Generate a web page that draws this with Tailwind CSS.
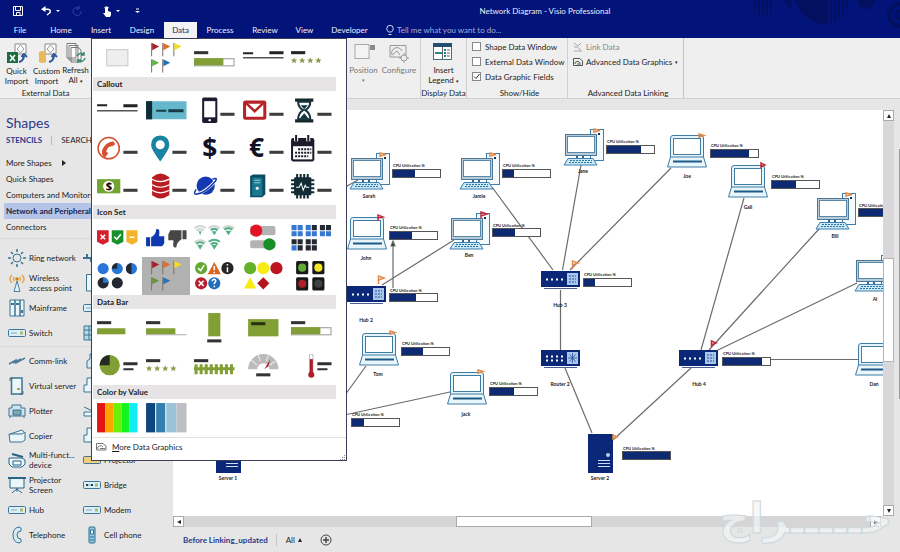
<!DOCTYPE html>
<html lang="en">
<head>
<meta charset="utf-8">
<meta name="viewport" content="width=device-width, initial-scale=1">
<title>Network Diagram - Visio Professional</title>
<script src="https://cdn.jsdelivr.net/npm/@tailwindcss/browser@4"></script>
</head>
<body class="relative flex h-screen flex-col overflow-hidden bg-[#e6e6e6] font-['Lato','Open_Sans',sans-serif] text-[8px] leading-[10px] text-[#1c1c1c]">

<svg class="hidden" aria-hidden="true">
  <defs>
    <g id="flag"><path d="M.5 0V13" stroke="#7d6f68"/><path d="M1 0L8 3.500L1 7Z" fill="currentColor"/></g>
    <path id="star" d="M3 0L3.900 2.200L6.200 2.300L4.400 3.800L5 6L3 4.800L1 6L1.600 3.800L-.2 2.300L2.100 2.200Z" fill="#8a9c4a"/>
    <path id="dash" d="M30 21.500h14v3h-14z" fill="#3d3d3d"/>
    <path id="up" d="M2 0L4 4H0Z" fill="#222"/>
    <g id="pc" stroke="#3d7fae" stroke-width="1">
      <rect x="26.500" y=".5" width="13" height="31" fill="#f4fbfe"/>
      <rect x="34" y="4" width="2" height="2" fill="#14304e" stroke="none"/>
      <rect x="1.500" y="5.500" width="31" height="21" fill="#b8cbd8" stroke="#4b7798"/>
      <rect x="3.500" y="7.500" width="27" height="16" fill="#fff" stroke="#5a88a8"/>
      <path d="M13 27v3M19 27v3" stroke="#2d6a98" stroke-width="2"/>
      <path d="M4 29.500H29L33 36H0Z" fill="#c9e7f5"/>
      <path d="M6 31.500H28M5 33.500H29" stroke="#2d77a6" stroke-dasharray="2 1"/>
    </g>
    <g id="laptop" stroke="#3f7ca5" stroke-width="1">
      <path d="M3.500 22V3Q3.500 .5 6 .5H34Q36.500 .5 36.500 3V22" fill="#e6f4fb"/>
      <rect x="6.500" y="3.500" width="27" height="16" fill="#fff"/>
      <path d="M3.500 22H36.500L39.500 32H.5Z" fill="#e8f5fb"/>
      <path d="M6 26.500H35" stroke="#1c5987" stroke-width="2"/>
    </g>
    <g id="hub">
      <rect width="39" height="16" fill="#0b2777"/>
      <path d="M3 17.500H36" stroke="#4a5e91"/>
      <path d="M5 8.500H22" stroke="#fff" stroke-width="2" stroke-dasharray="2 3"/>
      <rect x="26" y="2" width="11" height="12" fill="#a9c7ea"/>
      <path d="M28 5H35M28 8H35M28 11H35" stroke="#26509b" stroke-dasharray="2 1"/>
    </g>
    <g id="router">
      <rect width="39" height="16" fill="#0b2777"/>
      <path d="M3 17.500H36" stroke="#4a5e91"/>
      <path d="M5 6.500H22M5 10.500H22" stroke="#fff" stroke-width="2" stroke-dasharray="2 3"/>
      <rect x="26" y="2" width="11" height="12" fill="#a9c7ea"/>
      <path d="M31.500 3V13M27 8H36M28.500 4.500L34.500 11.500M34.500 4.500L28.500 11.500" stroke="#26509b" stroke-width=".8"/>
    </g>
    <g id="server">
      <rect width="25" height="39" fill="#0b2777"/>
      <circle cx="20" cy="21" r="2" fill="#b9cdf1"/>
      <path d="M10 26.500H22M10 29.500H22M10 32.500H22" stroke="#cfdcf5"/>
    </g>
    <g id="meter"><rect x=".5" y=".5" width="48" height="8" fill="#fff" stroke="#555"/></g>
    <g id="device" stroke="#3f7596" fill="#dceff7"><rect x=".5" y="5.500" width="17" height="7" rx="1"/><path d="M3 9H9" stroke="#7fa9c0"/><rect x="12" y="7.500" width="3" height="3" fill="#a8bd6b" stroke="none"/></g>
  </defs>
</svg>

<header class="relative shrink-0 bg-[#02137a] text-[#eef0fa]">
  <svg class="absolute right-0 top-0 h-[30px] w-[150px]" viewBox="750 0 150 30" aria-hidden="true">
    <g fill="#02105f"><path d="M754 0H756V13H754ZM758 0H760V16H758ZM762 0H764V14H762ZM766 0H768V17H766ZM770 0H772V13H770Z"/><path d="M784 0h7v9zM795 0H828V24Q805 25 795 0Z"/><path d="M830 0h2v23h-2zM834 0h2v21h-2zM838 0h2v18h-2zM842 0h2v14h-2zM846 0h2v8h-2z"/><path d="M857 0H875Q873 9 866 9T857 0Z"/></g>
    <g fill="none" stroke="#02105f"><circle cx="900" cy="15" r="11" stroke-width="4"/><circle cx="900" cy="15" r="4" stroke-width="3"/></g>
  </svg>
  <div class="relative flex h-[22px] items-center">
    <div class="flex w-[160px] items-center">
      <button class="ml-[13px]" aria-label="Save"><svg class="h-[10px] w-[10px]" viewBox="0 0 10 10" fill="none" stroke="#fff"><path d="M.5 .5H9.500V9.500H.5ZM2.500 .5V4.500H7.500V.5M3.500 9.500V6.500H7V9.500"/></svg></button>
      <button class="ml-[18px]" aria-label="Undo"><svg class="h-[10px] w-[20px]" viewBox="0 0 20 10"><path d="M4.500 0V6L0 3.200Z" fill="#fff"/><path d="M3 3.200H7Q10 3.500 9 6.500L6 9" fill="none" stroke="#fff" stroke-width="1.500"/><path d="M15 4h4l-2 2z" fill="#fff"/></svg></button>
      <button class="ml-[11px]" aria-label="Redo"><svg class="h-[10px] w-[10px]" viewBox="0 0 10 10" fill="none" stroke="#3042a0"><path d="M7 2A4 4 0 1 0 9 5M7 0V3H4"/></svg></button>
      <button class="ml-[21px]" aria-label="Touch mode"><svg class="h-[11px] w-[18px]" viewBox="0 0 18 11"><path d="M2 5V2Q3 0 5 1V5L8 6V9L7 11H3L0 7L2 7Z" fill="#fff"/><path d="M1 2Q3-1 6 2" fill="none" stroke="#fff" stroke-width=".7"/><path d="M13 4h4l-2 2z" fill="#fff"/></svg></button>
      <button class="ml-[14px]" aria-label="Customize toolbar"><svg class="h-[6px] w-[5px]" viewBox="0 0 5 6"><path d="M1 1H4" stroke="#fff"/><path d="M0 3h5l-2.500 2z" fill="#fff"/></svg></button>
    </div>
    <h1 class="grow pl-[30px] text-center">Network Diagram - Visio Professional</h1>
  </div>
  <nav class="relative flex h-4 items-center text-center">
    <a href="#" class="w-[40px]">File</a><a href="#" class="w-[42px]">Home</a><a href="#" class="w-[38px]">Insert</a><a href="#" class="w-[44px]">Design</a>
    <a href="#" class="h-4 w-[33px] bg-[#f3f3f5] leading-[16px] text-[#20285e]">Data</a>
    <a href="#" class="w-[46px]">Process</a><a href="#" class="w-[44px]">Review</a><a href="#" class="w-[35px]">View</a><a href="#" class="w-[55px]">Developer</a>
    <label for="tell" class="ml-[9px]" aria-label="Tell me"><svg class="h-[11px] w-2" viewBox="0 0 8 11" fill="none" stroke="#cfd5f0"><path d="M2.500 7Q.5 5 .8 3.500A3.200 3.200 0 0 1 7.200 3.500Q7.500 5 5.500 7ZM2.500 9.500H5.500"/></svg></label>
    <input id="tell" class="ml-[3px] w-[130px] bg-transparent placeholder:text-[#a3add9]" placeholder="Tell me what you want to do...">
  </nav>
</header>

<section class="flex h-[61px] shrink-0 border-b border-[#d2d0d2] bg-[#efefef]" aria-label="Data ribbon">
  <div class="flex w-[91px] flex-col justify-between">
    <div class="flex pt-[4px] text-center">
      <button class="w-[33px]"><svg class="mx-auto h-[23px] w-[22px]" viewBox="0 0 22 23"><path d="M9 1H20V11H9Z" fill="#fff" stroke="#888"/><path d="M14.500 2L18 6L14.500 10L11 6Z" fill="none" stroke="#999"/><rect x="1" y="9" width="11" height="11" fill="#1e6b41"/><path d="M4 12L9 18M9 12L4 18" stroke="#fff" stroke-width="1.500"/><path d="M13 19Q18 18 18 12M15.500 14L18 11L21 14" fill="none" stroke="#315a9c" stroke-width="2"/></svg>Quick<br>Import</button>
      <button class="w-[27px]"><svg class="mx-auto h-[23px] w-[22px]" viewBox="0 0 22 23"><path d="M9 1H20V11H9Z" fill="#fff" stroke="#888"/><path d="M14.500 2L18 6L14.500 10L11 6Z" fill="none" stroke="#999"/><path d="M3 9Q6.500 7 10 9V19Q6.500 21 3 19Z" fill="#eab857"/><path d="M13 19Q18 18 18 12M15.500 14L18 11L21 14" fill="none" stroke="#315a9c" stroke-width="2"/></svg>Custom<br>Import</button>
      <button class="w-[31px]"><svg class="mx-auto h-[23px] w-[22px]" viewBox="0 0 22 23" fill="#fff" stroke="#777"><path d="M2 1.500H11V16H2ZM4 3.500H13V18H4ZM6 5.500H13L16 8V20H6Z"/><path d="M12 14A4 4 0 0 1 19 13M20 16A4 4 0 0 1 13 18M19 10V13H16M13 21V18H16" fill="none" stroke="#3b8a68" stroke-width="1.500"/></svg>Refresh<br>All <span class="text-[5px]">▾</span></button>
    </div>
    <p class="text-center">External Data</p>
  </div>
  <div class="w-[256px]"></div>
  <div class="flex w-[74px] border-r border-[#d0d0d0] pt-[4px] text-center text-[#777]">
    <button class="flex w-[33px] flex-col items-center"><svg class="h-[23px] w-[22px]" viewBox="0 0 22 23"><rect x="2" y="2.500" width="14" height="14" fill="#f3f3f3" stroke="#aaa"/><path d="M17 3h5v5h-5z" fill="#888"/></svg>Position<span class="text-[5px]">▾</span></button>
    <button class="flex w-[38px] flex-col items-center"><svg class="h-[23px] w-[22px]" viewBox="0 0 22 23" fill="none" stroke="#999"><path d="M2 3.500H18V15H2Z" fill="#eee"/><path d="M4 13A5 5 0 0 1 14 9M4 13L9 9L12 13"/><circle cx="16" cy="16" r="3" fill="#eee"/><path d="M16 11V13M16 19V21M11 16H13M19 16H21"/></svg>Configure</button>
  </div>
  <div class="flex w-[46px] flex-col items-center justify-between border-r border-[#d0d0d0] pt-[4px]">
    <button class="text-center"><svg class="mx-auto h-[23px] w-[20px]" viewBox="0 0 20 23"><rect x=".5" y="1.500" width="18" height="16" fill="#fff" stroke="#446e85"/><path d="M0 1H19V5H0Z" fill="#214f72"/><path d="M2 11H9M11 8H13M11 11H13M11 14H13" stroke="#288" stroke-width="2"/><path d="M9.500 5V17M14 8H17M14 11H17M14 14H17" stroke="#666"/></svg>Insert<br>Legend <span class="text-[5px]">▾</span></button>
    <p class="whitespace-nowrap">Display Data</p>
  </div>
  <fieldset class="flex w-[101px] flex-col border-r border-[#d0d0d0] pl-[5px]">
    <label class="flex h-[15px] items-center gap-[4px] whitespace-nowrap pt-[2px]"><input type="checkbox" class="size-[9px] appearance-none border border-[#888] bg-white">Shape Data Window</label>
    <label class="flex h-[15px] items-center gap-[4px] whitespace-nowrap pt-[2px]"><input type="checkbox" class="size-[9px] appearance-none border border-[#888] bg-white">External Data Window</label>
    <label class="flex h-[15px] items-center gap-[4px] whitespace-nowrap pt-[2px]"><span class="grid"><input type="checkbox" checked class="col-start-1 row-start-1 size-[9px] appearance-none border border-[#888] bg-white"><svg class="pointer-events-none col-start-1 row-start-1 size-[9px]" viewBox="0 0 9 9" fill="none" stroke="#333"><path d="M2 4.500L4 6.500L7.500 2"/></svg></span>Data Graphic Fields</label>
    <p class="mt-auto text-center">Show/Hide</p>
  </fieldset>
  <div class="flex w-[116px] flex-col border-r border-[#c4c4c4] pl-[5px]">
    <button class="flex h-[15px] items-center gap-[3px] pt-[2px] text-[#888]"><svg class="size-[10px]" viewBox="0 0 10 10" fill="none" stroke="#aaa"><path d="M1 1L5 4L8 1M1 9H9M1 5H4L8 8"/></svg>Link Data</button>
    <button class="flex h-[15px] items-center gap-[3px] whitespace-nowrap pt-[2px]"><svg class="size-[10px]" viewBox="0 0 10 10" fill="none" stroke="#555"><path d="M.5 1.500H7L9.500 4V8.500H.5ZM2 7A2.500 2 0 0 1 7 6M4 7H8"/></svg>Advanced Data Graphics <span class="text-[5px]">▾</span></button>
    <p class="mt-auto text-center">Advanced Data Linking</p>
  </div>
</section>

<main class="flex min-h-0 grow">
  <aside class="flex w-[173px] shrink-0 flex-col pt-[14px]">
    <h2 class="pl-[6px] text-[14px] leading-[20px] text-[#2b3a86]">Shapes</h2>
    <div class="flex h-[14px] items-center pl-[6px]"><button class="font-bold text-[#253a91]">STENCILS</button><span class="ml-[9px] h-[9px] border-l border-[#bbb]"></span><button class="ml-[9px]">SEARCH</button></div>
    <ul class="mt-[8px] pl-[4px] leading-[16px]">
      <li><a href="#" class="flex items-center pl-[2px]">More Shapes<svg class="ml-[10px] h-[6px] w-[4px]" viewBox="0 0 4 6"><path d="M0 0L4 3L0 6Z" fill="#222"/></svg></a></li>
      <li><a href="#" class="block pl-[2px]">Quick Shapes</a></li>
      <li><a href="#" class="block pl-[2px]">Computers and Monitors</a></li>
      <li><a href="#" class="block bg-[#b5c3e9] pl-[2px] font-bold text-[#182546]">Network and Peripherals</a></li>
      <li><a href="#" class="block pl-[2px]">Connectors</a></li>
    </ul>
    <div class="mt-[3px] border-t border-[#d9d9d9]"></div>
    <div class="mt-[6px] grid auto-rows-[25px] grid-cols-[75px_1fr] pl-[8px]">
      <button class="flex items-center gap-[3px] whitespace-nowrap text-left"><svg class="size-[18px] shrink-0" viewBox="0 0 18 18" fill="none" stroke="#3c7391"><circle cx="9" cy="9" r="4"/><path d="M9 0V3M9 15V18M0 9H3M15 9H18M3 3L5 5M13 13L15 15M15 3L13 5M5 13L3 15" stroke-width="1.500"/></svg>Ring network</button>
      <button class="flex items-center" aria-label="Ethernet"><svg class="size-[18px]" viewBox="0 0 18 18" stroke="#3c7391" stroke-width="2"><path d="M0 9H18M4 9V5M8 9V13M12 9V5"/></svg></button>
      <button class="flex items-center gap-[3px] whitespace-nowrap text-left"><svg class="size-[18px] shrink-0" viewBox="0 0 18 18" fill="none" stroke="#e6a64b"><path d="M4 1Q0 5 4 9M14 1Q18 5 14 9M6.500 3Q4.500 5 6.500 7M11.500 3Q13.500 5 11.500 7" stroke-width="1.500"/><circle cx="9" cy="5" r="1.500" fill="#b77519"/><path d="M9 7L6 17.500H12Z" stroke="#4a829d" fill="#dff1f8"/></svg>Wireless<br>access point</button>
      <button class="flex items-center pl-[3px]" aria-label="Server"><svg class="size-[18px]" viewBox="0 0 18 18" fill="#eaf6fa" stroke="#3c7391"><path d="M.5 .5H12V17H.5Z"/></svg></button>
      <button class="flex items-center gap-[3px] text-left"><svg class="size-[18px] shrink-0" viewBox="0 0 18 18" fill="#eaf6fa" stroke="#3c7391"><path d="M2 1H7V17H2ZM7 1H12V17H7ZM12 1H16V17H12Z"/><path d="M3 5H6M8 5H11M14 11V14" stroke-width="2"/></svg>Mainframe</button>
      <button class="flex items-center" aria-label="Router"><svg class="size-[18px]" viewBox="0 0 18 18"><use href="#device"/></svg></button>
      <button class="flex items-center gap-[3px] text-left"><svg class="size-[18px] shrink-0" viewBox="0 0 18 18"><use href="#device"/></svg>Switch</button>
      <button class="flex items-center" aria-label="Firewall"><svg class="size-[18px]" viewBox="0 0 18 18" fill="#b9d7e4" stroke="#3c7391"><path d="M1 2H16V16H1ZM1 6H16M1 11H16M6 2V16M11 2V16"/></svg></button>
    </div>
    <div class="mt-px border-t border-[#dadada]"></div>
    <div class="mt-[2px] grid min-h-0 grow auto-rows-fr grid-cols-[75px_1fr] pb-[5px] pl-[8px]">
      <button class="flex items-center gap-[3px] text-left"><svg class="size-[18px] shrink-0" viewBox="0 0 18 18" fill="none" stroke="#4f7c99" stroke-width="1.500"><path d="M1 12L8 8L8 11L17 6M5 11L13 7"/></svg>Comm-link</button>
      <button class="flex items-center pl-[3px]" aria-label="Super computer"><svg class="size-[18px]" viewBox="0 0 18 18" fill="#d8eaf1" stroke="#3c7391"><path d="M1 16V9L4 7V2H12V16Z"/></svg></button>
      <button class="flex items-center gap-[3px] whitespace-nowrap text-left"><svg class="size-[18px] shrink-0" viewBox="0 0 18 18" fill="#eaf6fa" stroke="#3c7391"><path d="M3.500 1H14V17H3.500Z" stroke-width="1.500"/><path d="M2 4V1H5M15 14V17H12" fill="none"/><path d="M9 12H12" stroke="#b5a25a" stroke-width="2"/></svg>Virtual server</button>
      <button class="flex items-center" aria-label="Printer"><svg class="size-[18px]" viewBox="0 0 18 18" fill="#eaf6fa" stroke="#3c7391"><path d="M4 1H14V8H17V15H1V8H4Z"/></svg></button>
      <button class="flex items-center gap-[3px] text-left"><svg class="size-[18px] shrink-0" viewBox="0 0 18 18" fill="#cfe5ee" stroke="#3c7391"><path d="M4 3H13V6H17V14H1V6H4Z"/><path d="M5 8H13V13H5Z" fill="#7aaab2"/><path d="M2 14V16M16 14V16"/></svg>Plotter</button>
      <button class="flex items-center" aria-label="Scanner"><svg class="size-[18px]" viewBox="0 0 18 18" fill="#eaf6fa" stroke="#3c7391"><path d="M1 5L12 10H17V14H1V10H12"/></svg></button>
      <button class="flex items-center gap-[3px] text-left"><svg class="size-[18px] shrink-0" viewBox="0 0 18 18" fill="#eaf6fa" stroke="#3c7391"><path d="M1 7H14L17 5V13L14 15H2ZM2 7L14 3L16 5"/></svg>Copier</button>
      <button class="flex items-center" aria-label="Printer"><svg class="size-[18px]" viewBox="0 0 18 18" fill="#eaf6fa" stroke="#3c7391"><path d="M4 1H14V8H17V15H1V8H4Z"/></svg></button>
      <button class="flex items-center gap-[3px] whitespace-nowrap text-left"><svg class="size-[18px] shrink-0" viewBox="0 0 18 18" fill="#eaf6fa" stroke="#286486"><path d="M1 7H14L17 9V13L14 16H4L1 13Z"/><path d="M4 3L15 6" stroke-width="2"/><path d="M5 10H13V14H5Z"/></svg>Multi-funct...<br>device</button>
      <button class="flex items-center gap-[3px] text-left"><svg class="size-[18px] shrink-0" viewBox="0 0 18 18"><rect x=".5" y="5.500" width="17" height="7" rx="1" fill="#f2ce7c" stroke="#3f7596"/></svg>Projector</button>
      <button class="flex items-center gap-[3px] text-left"><svg class="size-[18px] shrink-0" viewBox="0 0 18 18" fill="#eaf6fa" stroke="#286486"><path d="M0 2H18" stroke-width="2"/><path d="M2 2.500H16V12H2ZM9 12V16M4 17L9 13L14 17"/></svg>Projector<br>Screen</button>
      <button class="flex items-center gap-[3px] text-left"><svg class="size-[18px] shrink-0" viewBox="0 0 18 18"><use href="#device"/><path d="M3 8h2v2H3zM8 8h2v2H8z" fill="#244"/></svg>Bridge</button>
      <button class="flex items-center gap-[3px] text-left"><svg class="size-[18px] shrink-0" viewBox="0 0 18 18"><use href="#device"/></svg>Hub</button>
      <button class="flex items-center gap-[3px] text-left"><svg class="size-[18px] shrink-0" viewBox="0 0 18 18"><use href="#device"/></svg>Modem</button>
      <button class="flex items-center gap-[3px] text-left"><svg class="size-[18px] shrink-0" viewBox="0 0 18 18" fill="#d5eaf3" stroke="#397394"><path d="M11 1Q5 2 5 9T11 17L13 16V13L10 12Q8 9 10 6L13 5V2Z"/></svg>Telephone</button>
      <button class="flex items-center gap-[3px] text-left"><svg class="size-[18px] shrink-0" viewBox="0 0 18 18" fill="#99c8dc" stroke="#286f92"><rect x="6" y="1" width="6" height="16" rx="1"/><path d="M7.500 4H10.500V8H7.500Z" fill="#fff"/><path d="M7 11H11M7 14H11"/></svg>Cell phone</button>
    </div>
  </aside>

  <div class="flex min-w-0 grow flex-col">
    <div class="mt-[11px] flex min-h-0 grow">
      <div class="min-w-0 grow overflow-hidden bg-white">
        <svg class="h-[406px] w-[710px]" viewBox="173 110 710 406" role="img" aria-label="Network diagram">
          <g stroke="#6c6c6c" stroke-width="1.200">
            <path d="M340 190L358 180M492 187L553 270M454 240L382 285M581 165L562.500 270M671 168L570 270M560.500 290V350M565 368L592 433M613 440L691 368M701 350L744 198M709 350L819 229M718 350L857 283M770 359.500H858M366 366L340 402M450 392L340 416M393 288V244"/>
            <path d="M391 246L393 241L395 246Z" fill="#333"/>
          </g>
          <use href="#pc" x="350" y="153"/><use href="#pc" x="460" y="153"/><use href="#pc" x="564" y="129"/><use href="#pc" x="450" y="213"/><use href="#pc" x="816" y="193"/><use href="#pc" x="855" y="255"/>
          <use href="#laptop" x="347" y="217"/><use href="#laptop" x="667" y="135"/><use href="#laptop" x="728" y="165"/><use href="#laptop" x="359" y="333"/><use href="#laptop" x="447" y="372"/><use href="#laptop" x="855" y="343"/>
          <use href="#hub" x="347" y="286"/><use href="#hub" x="541" y="271"/><use href="#router" x="541" y="350"/><use href="#hub" x="679" y="350"/>
          <use href="#server" x="588" y="434"/><use href="#server" x="216" y="434"/>
          <g fill="none" stroke="#e28a4b" stroke-width="1.500">
            <path d="M380 157V153L386 154.500L380 156M490 157V153L496 154.500L490 156M594 133V129L600 130.500L594 132M699 138V134L704 135.500L699 137M846 197V193L852 194.500L846 196M390 335V331L395 332.500L390 334M478 374V370L483 371.500L478 373M378.500 284V276L384 278L378.500 280M572.500 269V261L578 263L572.500 265M613 440V435L617 437L613 439"/>
            <path d="M378 221V215L383 217L378 218M761 168V163L765 165L761 167M481 218V212L487 214L481 216M711.500 347V341L716 343L711.500 345" stroke="#c22736"/>
          </g>
          <use href="#meter" x="392" y="169"/><use href="#meter" x="502" y="169"/><use href="#meter" x="606" y="145"/><use href="#meter" x="492" y="228"/><use href="#meter" x="389" y="231"/><use href="#meter" x="389" y="293"/><use href="#meter" x="583" y="278"/><use href="#meter" x="710" y="149"/><use href="#meter" x="771" y="180"/><use href="#meter" x="858" y="208"/><use href="#meter" x="401" y="347"/><use href="#meter" x="489" y="387"/><use href="#meter" x="351" y="418"/><use href="#meter" x="722" y="357"/><use href="#meter" x="622" y="451"/>
          <path fill="#0d2a72" d="M393 170h22v7h-22zM503 170h11v7h-11zM607 146h34v7h-34zM493 229h22v7h-22zM390 232h22v7h-22zM390 294h26v7h-26zM584 279h11v7h-11zM711 150h38v7h-38zM772 181h24v7h-24zM859 209h47v7h-47zM402 348h21v7h-21zM490 388h24v7h-24zM352 419h12v7h-12zM723 358h39v7h-39zM623 452h47v7h-47z"/>
          <g class="font-['Lato',sans-serif] text-[4px] font-bold" fill="#222">
            <text x="393" y="167">CPU Utilization %</text><text x="503" y="167">CPU Utilization %</text><text x="607" y="143">CPU Utilization %</text><text x="493" y="227">CPU Utilization %</text><text x="390" y="229">CPU Utilization %</text><text x="390" y="292">CPU Utilization %</text><text x="584" y="276">CPU Utilization %</text><text x="711" y="147">CPU Utilization %</text><text x="772" y="178">CPU Utilization %</text><text x="859" y="207">CPU Utilization %</text><text x="402" y="345">CPU Utilization %</text><text x="490" y="385">CPU Utilization %</text><text x="352" y="416">CPU Utilization %</text><text x="723" y="355">CPU Utilization %</text><text x="623" y="450">CPU Utilization %</text>
          </g>
          <g class="font-['Lato',sans-serif] text-[5px] font-bold" text-anchor="middle" fill="#222">
            <text x="369" y="198">Sarah</text><text x="479" y="198">Jamie</text><text x="583" y="173">Jane</text><text x="469" y="257">Ben</text><text x="835" y="238">Bill</text><text x="875" y="301">Al</text>
            <text x="366" y="260">John</text><text x="687" y="178">Joe</text><text x="748" y="209">Gail</text><text x="378" y="376">Tom</text><text x="466" y="416">jack</text><text x="874" y="386">Dan</text>
            <text x="366" y="322">Hub 2</text><text x="560" y="307">Hub 3</text><text x="560" y="386">Router 2</text><text x="699" y="386">Hub 4</text><text x="600" y="480">Server 2</text><text x="228" y="480">Server 1</text>
          </g>
        </svg>
      </div>
      <div class="flex w-[11px] shrink-0 flex-col bg-[#d9d7d9]">
        <button class="grid h-[11px] place-items-center border border-[#aaa] bg-white" aria-label="Scroll up"><svg class="size-[4px]" viewBox="0 0 4 4"><use href="#up"/></svg></button>
        <div class="grow-[138]"></div><div class="grow-[102] border border-[#b5b5b5] bg-white"></div><div class="grow-[144]"></div>
        <button class="grid h-[11px] place-items-center border border-[#aaa] bg-white" aria-label="Scroll down"><svg class="size-[4px] rotate-180" viewBox="0 0 4 4"><use href="#up"/></svg></button>
      </div>
      <div class="flex w-[6px] shrink-0 flex-col items-end"><div class="mt-[39px] h-[250px] border-r border-[#9b9b9b]"></div></div>
    </div>
    <div class="mr-[19px] flex h-[11px] shrink-0 bg-[#d5d5d5]">
      <button class="grid w-[11px] place-items-center border border-[#aaa] bg-white" aria-label="Scroll left"><svg class="size-[4px] -rotate-90" viewBox="0 0 4 4"><use href="#up"/></svg></button>
      <div class="grow-[273]"></div><div class="grow-[134] border border-[#aaa] bg-white"></div><div class="grow-[279]"></div>
      <button class="grid w-[11px] place-items-center border border-[#aaa] bg-white" aria-label="Scroll right"><svg class="size-[4px] rotate-90" viewBox="0 0 4 4"><use href="#up"/></svg></button>
    </div>
    <div class="flex h-[25px] shrink-0 items-center pl-[10px]">
      <button class="font-bold text-[#253a8b]">Before Linking_updated</button>
      <span class="ml-[8px] h-[12px] border-l border-[#c4c4c4]"></span>
      <button class="ml-[9px] flex items-center gap-[3px]">All<svg class="size-[4px]" viewBox="0 0 4 4"><use href="#up"/></svg></button>
      <button class="ml-[18px]" aria-label="Insert page"><svg class="size-[12px]" viewBox="0 0 12 12" fill="none" stroke="#444"><circle cx="6" cy="6" r="5"/><path d="M6 3V9M3 6H9" stroke-width="1.500"/></svg></button>
    </div>
  </div>
</main>

<div class="pointer-events-none absolute bottom-[5px] right-[8px] font-['DejaVu_Sans',sans-serif] text-[42px] font-bold leading-[56px] text-[#f4f6f7]/70 [-webkit-text-stroke:1px_#ccd7dc]" lang="ar" dir="rtl">حـــــراج</div>

<section class="absolute left-[91px] top-[38px] w-[256px] border border-[#3c3f58] bg-white pl-px" aria-label="Data graphics gallery">
  <div class="grid w-[243px] auto-rows-[38px] grid-cols-5">
    <button aria-label="No data graphic"><svg viewBox="0 0 48 38"><rect x="13.500" y="10.500" width="21" height="16" fill="#eee" stroke="#c9c9c9"/></svg></button>
    <button aria-label="Flags"><svg viewBox="0 0 48 38"><use href="#flag" x="9" y="4" color="#a91f2c"/><use href="#flag" x="20" y="4" color="#df6c27"/><use href="#flag" x="31" y="4" color="#f1dc25"/><use href="#flag" x="9" y="20" color="#67b147"/><use href="#flag" x="20" y="20" color="#2672b5"/></svg></button>
    <button aria-label="Progress bar"><svg viewBox="0 0 48 38"><path d="M4 12h14v3H4z" fill="#333"/><rect x="4.500" y="19.500" width="39" height="7" fill="#fff" stroke="#999"/><path d="M4 19h29v7H4z" fill="#819f35"/></svg></button>
    <button aria-label="Text callout"><svg viewBox="0 0 48 38"><path d="M4 13h10v2H4zM30 12h14v3H30z" fill="#222"/><path d="M4 18.500H44" stroke="#555" stroke-width="1.500"/></svg></button>
    <button aria-label="Rating"><svg viewBox="0 0 48 38"><path d="M4 12h14v3H4z" fill="#222"/><use href="#star" x="4" y="18"/><use href="#star" x="12" y="18"/><use href="#star" x="20" y="18"/><use href="#star" x="28" y="18"/></svg></button>
  </div>
  <h3 class="h-[14px] w-[243px] bg-[#e6e4e5] pl-[4px] font-bold leading-[14px]">Callout</h3>
  <div class="grid w-[243px] auto-rows-[38px] grid-cols-5">
    <button aria-label="Text callout"><svg viewBox="0 0 48 38"><path d="M4 13h10v2H4zM30 13h14v3H30z" fill="#222"/><path d="M4 19.500H44" stroke="#555" stroke-width="1.500"/></svg></button>
    <button aria-label="Panel callout"><svg viewBox="0 0 48 38"><path d="M4 10h40v18H4z" fill="#65b8cc"/><path d="M4 10h6v18H4z" fill="#102d36"/><path d="M14 18.500h10v2H14zM26 18h15v3H26z" fill="#173b45"/></svg></button>
    <button aria-label="Phone"><svg viewBox="0 0 48 38"><rect x="12" y="6.500" width="15" height="25" rx="1.500" fill="#1c1c31"/><path d="M14 10h11v16H14z" fill="#fff"/><circle cx="19.500" cy="28.800" r="1.200" fill="#fff"/><use href="#dash"/></svg></button>
    <button aria-label="Mail"><svg viewBox="0 0 48 38"><rect x="5.500" y="11" width="20" height="16" rx="1" fill="#fff" stroke="#b52329" stroke-width="3"/><path d="M7 12L15.500 20L24 12" fill="none" stroke="#b52329" stroke-width="2.500"/><use href="#dash"/></svg></button>
    <button aria-label="Hourglass"><svg viewBox="0 0 48 38"><path d="M8 7.500h18v3H8zM8 28h18v3H8z" fill="#16262b"/><path d="M11 10.500Q11 16 16 19Q11 22 11 28H23Q23 22 18 19Q23 16 23 10.500Z" fill="#fff" stroke="#16343d" stroke-width="2"/><path d="M13.500 14H20.500L17 18ZM17 22L21.500 27.500H12.500Z" fill="#16343d"/><use href="#dash"/></svg></button>
    <button aria-label="Call"><svg viewBox="0 0 48 38"><circle cx="15.500" cy="19" r="10.500" fill="#fff" stroke="#d54f30" stroke-width="1.500"/><path d="M20 12L22 15L19 17Q15 17 14 20L13 22L15 24L12 28Q8 27 9 21Q12 13 20 12Z" fill="#d54f30"/><use href="#dash"/></svg></button>
    <button aria-label="Location"><svg viewBox="0 0 48 38"><path fill-rule="evenodd" d="M18 6.500Q27 7 27 16Q27 20 18 32Q9 20 9 16Q9 7 18 6.500ZM18 11A4.500 4.500 0 1 0 18 20A4.500 4.500 0 1 0 18 11Z" fill="#1983a2"/><use href="#dash"/></svg></button>
    <button aria-label="Dollar"><svg viewBox="0 0 48 38"><text x="12" y="28" class="font-['Open_Sans',sans-serif] text-[26px] font-bold" fill="#111126">$</text><use href="#dash"/></svg></button>
    <button aria-label="Euro"><svg viewBox="0 0 48 38"><text x="10" y="28" class="font-['Open_Sans',sans-serif] text-[26px] font-bold" fill="#111126">€</text><use href="#dash"/></svg></button>
    <button aria-label="Calendar"><svg viewBox="0 0 48 38"><rect x="4" y="9" width="23" height="23" rx="2" fill="#1b1b2b"/><path d="M6 17h19v13H6z" fill="#fff"/><path d="M9 6V12M21 6V12" stroke="#fff" stroke-width="4"/><path d="M9 6V12M21 6V12" stroke="#1b1b2b" stroke-width="2"/><path d="M11 20H24M8 23.500H24M8 27H21" stroke="#1b1b2b" stroke-width="2" stroke-dasharray="2 1"/><use href="#dash"/></svg></button>
    <button aria-label="Money"><svg viewBox="0 0 48 38"><path d="M4 12h23v14H4z" fill="#72a52f"/><circle cx="15.500" cy="19" r="5.500" fill="#fff"/><text x="12.500" y="23" class="font-['Open_Sans',sans-serif] text-[11px] font-bold">$</text><use href="#dash"/></svg></button>
    <button aria-label="Database"><svg viewBox="0 0 48 38"><path d="M10 10V28Q18 34 27 28V10Q18 3 10 10Z" fill="#b91c23"/><path d="M10 12Q18 17 27 12M10 17.500Q18 22.500 27 17.500M10 23Q18 28 27 23" fill="none" stroke="#fff" stroke-width="1.200"/><use href="#dash"/></svg></button>
    <button aria-label="Planet"><svg viewBox="0 0 48 38"><circle cx="15.500" cy="18.500" r="9" fill="#1539b2"/><path d="M6 23Q3 28 6 27Q15 25 25 14Q28 10 22 12" fill="none" stroke="#fff" stroke-width="3"/><path d="M6 22Q3 27 6 27Q15 26 25 14Q28 10 22 12" fill="none" stroke="#1539b2" stroke-width="1.500"/><use href="#dash"/></svg></button>
    <button aria-label="Server"><svg viewBox="0 0 48 38"><path d="M11 9L14 7.500H26V27L23 30H11Z" fill="#0c4a61"/><path d="M13 10.500H23V28.500H13Z" fill="#1b7891"/><path d="M15 13H21M15 15.500H21" stroke="#8bd0dc"/><circle cx="18" cy="21" r="1.500" fill="#fff"/><use href="#dash"/></svg></button>
    <button aria-label="Processor"><svg viewBox="0 0 48 38"><path d="M10 7V31M13.500 7V31M17 7V31M20.500 7V31M4 13H27M4 17H27M4 21H27M4 25H27" stroke="#122b35" stroke-width="2"/><rect x="7" y="10" width="17" height="18" rx="1" fill="#122b35"/><path d="M9 20H12L14 16L16 23L18 18L19 20H22" fill="none" stroke="#fff"/><use href="#dash"/></svg></button>
  </div>
  <h3 class="h-[14px] w-[243px] bg-[#e6e4e5] pl-[4px] font-bold leading-[14px]">Icon Set</h3>
  <div class="grid w-[243px] auto-rows-[38px] grid-cols-5">
    <button aria-label="Shields"><svg viewBox="0 0 48 38"><path d="M4 11H15.500V22.500L9.700 25.500L4 22.500Z" fill="#d71e2c"/><path d="M18.500 11H30V22.500L24.200 25.500L18.500 22.500Z" fill="#16912c"/><path d="M33 11H44V22.500L38.500 25.500L33 22.500Z" fill="#f4b32b"/><path d="M7.500 15.500L12 20M12 15.500L7.500 20M21 17.500L23.500 20L27.500 15M36 18H41" fill="none" stroke="#fff" stroke-width="1.500"/></svg></button>
    <button aria-label="Thumbs"><svg viewBox="0 0 48 38"><path d="M4 18H8V27H4ZM9 18Q14 15 14 10Q18 9 17 15V17H22V24L20 27H9Z" fill="#1138ae"/><path d="M40 11H44V20H40ZM39 20Q34 23 34 28Q30 29 31 23V21H26V15L28 11H39Z" fill="#464646"/></svg></button>
    <button aria-label="Signal strength"><svg viewBox="0 0 48 38" fill="none" stroke-width="2"><g stroke="#cfd6d3"><path d="M4.500 9Q10 5 15.500 9M6.500 11.500Q10 8.500 13.500 11.500M18.500 9Q24 5 29.500 9M32.500 9Q38 5 43.500 9M4.500 23Q10 19 15.500 23"/></g><path d="M20.500 11Q24 8.500 27.500 11M34 10.500Q38 7.500 42 10.500M6 24.500Q10 21.500 14 24.500M18.500 22.500Q24 18.500 29.500 22.500M20.500 25Q24 22.500 27.500 25" stroke="#55ae86"/><path d="M8.500 12H11.500L10 16ZM21.500 12H26.500L24 16ZM35 11.500H41L38 16ZM7 25.500H13L10 30.500ZM21 25.500H27L24 30.500Z" fill="#55ae86"/></svg></button>
    <button aria-label="Switches"><svg viewBox="0 0 48 38"><rect x="11" y="7" width="25" height="9" rx="2" fill="#b5b2b5"/><rect x="11" y="21" width="25" height="8" rx="2" fill="#b5b2b5"/><circle cx="17" cy="11.500" r="6" fill="#e31422"/><circle cx="30" cy="25" r="6" fill="#168f25"/></svg></button>
    <button aria-label="Boxes"><svg viewBox="0 0 48 38"><path d="M4.500 6h5v5h-5zM10.500 6h5v5h-5zM4.500 12h5v5h-5zM10.500 12h5v5h-5zM18.500 6h5v5h-5zM18.500 12h5v5h-5zM24.500 12h5v5h-5zM32.500 12h5v5h-5zM38.500 12h5v5h-5zM4.500 26h5v5h-5z" fill="#3877cf"/><path d="M24.500 6h5v5h-5zM32.500 6h5v5h-5zM38.500 6h5v5h-5zM4.500 20h5v5h-5zM10.500 20h5v5h-5zM10.500 26h5v5h-5zM18.500 20h5v5h-5zM24.500 20h5v5h-5zM18.500 26h5v5h-5zM24.500 26h5v5h-5z" fill="#242832"/></svg></button>
    <button aria-label="Quarters"><svg viewBox="0 0 48 38"><g fill="#2777d8"><circle cx="10" cy="11.500" r="5.500"/><circle cx="24" cy="11.500" r="5.500"/><circle cx="38" cy="11.500" r="5.500"/></g><g fill="#232931"><circle cx="10" cy="25.500" r="5.500"/><circle cx="24" cy="25.500" r="5.500"/><path d="M24 11.500V6A5.500 5.500 0 0 0 18.500 11.500ZM38 6A5.500 5.500 0 0 0 38 17Z"/></g><path d="M10 25.500V20A5.500 5.500 0 0 1 15.500 25.500Z" fill="#2777d8"/></svg></button>
    <button class="bg-[#b2b1b2]" aria-label="Flags" aria-pressed="true"><svg viewBox="0 0 48 38"><use href="#flag" x="9" y="4" color="#a91f2c"/><use href="#flag" x="20" y="4" color="#df6c27"/><use href="#flag" x="31" y="4" color="#f1dc25"/><use href="#flag" x="9" y="20" color="#67963f"/><use href="#flag" x="20" y="20" color="#2672b5"/></svg></button>
    <button aria-label="Status"><svg viewBox="0 0 48 38"><circle cx="11" cy="11" r="6" fill="#64a936"/><path d="M24 5L30.500 17H17.500Z" fill="#dc641e"/><circle cx="37" cy="11" r="6" fill="#252525"/><circle cx="11" cy="26" r="6" fill="#b41f2b"/><circle cx="24" cy="26" r="6" fill="#206db9"/><path d="M8 11L10.500 13.500L14 8M24 9V13M24 14.500V16M37 7V8.500M37 10V15M8.500 23.500L13.500 28.500M13.500 23.500L8.500 28.500M22 24Q22 22 24 22Q27 23 24 26V27M24 28.500V30" fill="none" stroke="#fff" stroke-width="1.500"/></svg></button>
    <button aria-label="Colored shapes"><svg viewBox="0 0 48 38"><circle cx="11" cy="11" r="6" fill="#64b12c"/><circle cx="24" cy="11" r="6" fill="#f7eb13"/><circle cx="37" cy="11" r="6" fill="#bd1520"/><path d="M11 20L17 31H5Z" fill="#f7eb13"/><path d="M24 20L30 26L24 32L18 26Z" fill="#b31621"/></svg></button>
    <button aria-label="Traffic lights"><svg viewBox="0 0 48 38"><g fill="#191a1a"><rect x="9" y="4" width="12" height="13" rx="1.500"/><rect x="25" y="4" width="12" height="13" rx="1.500"/><rect x="9" y="20" width="12" height="13" rx="1.500"/><rect x="25" y="20" width="12" height="13" rx="1.500"/></g><circle cx="15" cy="10.500" r="4" fill="#60ac37"/><circle cx="31" cy="10.500" r="4" fill="#f4e62a"/><circle cx="15" cy="26.500" r="4" fill="#ac202a"/><circle cx="31" cy="26.500" r="4" fill="#414244"/></svg></button>
  </div>
  <h3 class="h-[14px] w-[243px] bg-[#e6e4e5] pl-[4px] font-bold leading-[14px]">Data Bar</h3>
  <div class="grid w-[243px] auto-rows-[38px] grid-cols-5">
    <button aria-label="Data bar"><svg viewBox="0 0 48 38"><path d="M4 12h14v3H4z" fill="#333"/><path d="M4 19h28v6H4z" fill="#819f35"/></svg></button>
    <button aria-label="Data bar with axis"><svg viewBox="0 0 48 38"><path d="M4 12h14v3H4z" fill="#333"/><path d="M4 19h29v6H4z" fill="#819f35"/><path d="M4 25.500H44" stroke="#aaa"/></svg></button>
    <button aria-label="Vertical bar"><svg viewBox="0 0 48 38"><path d="M18 4h12v23H18z" fill="#819f35"/><path d="M17 30h14v3H17z" fill="#333"/></svg></button>
    <button aria-label="Filled box"><svg viewBox="0 0 48 38"><path d="M9 10h30v17H9z" fill="#819f35"/><path d="M12 13h14v3H12z" fill="#29310f"/></svg></button>
    <button aria-label="Progress bar"><svg viewBox="0 0 48 38"><path d="M4 12h14v3H4z" fill="#333"/><rect x="4.500" y="18.500" width="39" height="7" fill="#fff" stroke="#999"/><path d="M4 18h29v7H4z" fill="#819f35"/></svg></button>
    <button aria-label="Pie"><svg viewBox="0 0 48 38"><circle cx="16.500" cy="18" r="10" fill="#819f35"/><path d="M16.500 18V8A10 10 0 0 0 6.500 18Z" fill="#252a25"/><path d="M30 15h14v3H30zM30 21h10v2H30z" fill="#333"/></svg></button>
    <button aria-label="Stars"><svg viewBox="0 0 48 38"><path d="M4 12h14v3H4z" fill="#333"/><use href="#star" x="4" y="18"/><use href="#star" x="12" y="18"/><use href="#star" x="20" y="18"/><use href="#star" x="28" y="18"/></svg></button>
    <button aria-label="People"><svg viewBox="0 0 48 38"><path d="M4 12h14v3H4z" fill="#333"/><path d="M6 17V27M11 17V27M16 17V27M21 17V27M26 17V27M31 17V27M36 17V27M41 17V27" stroke="#819f35" stroke-width="3"/><path d="M4 21.500H44" stroke="#819f35" stroke-width="3"/></svg></button>
    <button aria-label="Gauge"><svg viewBox="0 0 48 38"><path d="M9 22A15 15 0 0 1 39 22H30A6 6 0 0 0 18 22Z" fill="#bcbabc"/><path d="M12 13L18 18M19 8L21 14M29 8L27 14M36 14L30 18" stroke="#eee"/><path d="M31 12L25 22L29 19Z" fill="#9f202b"/><path d="M17 26h14v3H17z" fill="#333"/></svg></button>
    <button aria-label="Thermometer"><svg viewBox="0 0 48 38"><path d="M24 7V28" stroke="#aaa" stroke-width="4"/><path d="M24 7.500V12" stroke="#fff" stroke-width="2.500"/><path d="M24 12V28" stroke="#b11e2b" stroke-width="3"/><circle cx="24" cy="27.500" r="3" fill="#b11e2b"/><path d="M30 15h14v3H30zM30 21h10v2H30z" fill="#333"/></svg></button>
  </div>
  <h3 class="h-[14px] w-[243px] bg-[#e6e4e5] pl-[4px] font-bold leading-[14px]">Color by Value</h3>
  <div class="grid w-[243px] auto-rows-[38px] grid-cols-5">
    <button aria-label="Rainbow"><svg viewBox="0 0 48 38"><path d="M4 4h8v29H4z" fill="#e41513"/><path d="M12 4h8v29h-8z" fill="#ffa500"/><path d="M20 4h8v29h-8z" fill="#6bf009"/><path d="M28 4h8v29h-8z" fill="#13f521"/><path d="M36 4h8v29h-8z" fill="#11ecf5"/></svg></button>
    <button aria-label="Blue scale"><svg viewBox="0 0 48 38"><path d="M4 4h9v29H4z" fill="#0f477c"/><path d="M14 4h9v29h-9z" fill="#337fae"/><path d="M24 4h10v29H24z" fill="#9ac3d9"/><path d="M34 4h10v29H34z" fill="#bebfc4"/></svg></button>
  </div>
  <div class="relative flex h-[23px] items-start border-t border-[#e1e1e1] pl-[3px] pt-[3px]">
    <button class="flex items-center gap-[5px]"><svg class="size-[11px]" viewBox="0 0 11 11" fill="none" stroke="#777"><path d="M.5 2.500H7L10 5V9H.5ZM2 8A2.500 2 0 0 1 7 6M4 7.500H9"/></svg><span><u>M</u>ore Data Graphics</span></button>
    <svg class="absolute bottom-0 right-px size-[5px]" viewBox="0 0 5 5" fill="#888" aria-hidden="true"><path d="M4 0h1v1H4zM2 2h1v1H2zM4 2h1v1H4zM0 4h1v1H0zM2 4h1v1H2zM4 4h1v1H4z"/></svg>
  </div>
</section>
</body>
</html>
